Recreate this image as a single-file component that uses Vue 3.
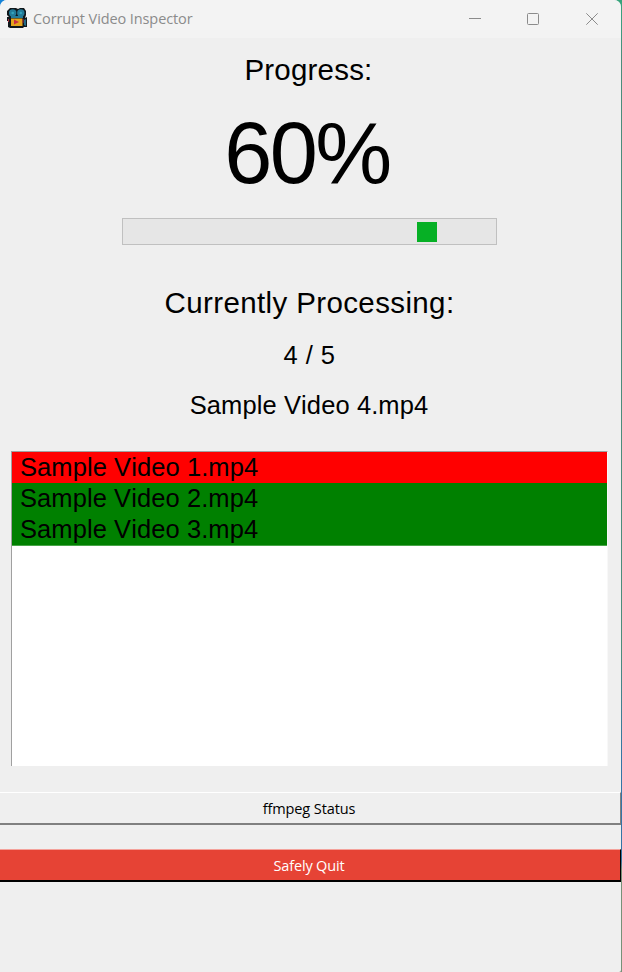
<script setup>
const videos = [
  { name: 'Sample Video 1.mp4', corrupt: true },
  { name: 'Sample Video 2.mp4', corrupt: false },
  { name: 'Sample Video 3.mp4', corrupt: false },
]
const marker = { left: 293 }
</script>

<template>
  <div class="desktop">
    <main class="window">
      <header class="titlebar">
        <svg class="logo" width="21" height="21" viewBox="0 0 21 21">
          <path d="M3 0h6l2 1 2-1h4l2 3v4l-1 3 2-1v10h-3l-1 1H3l-2-1v-6H0v-4h2L0 7V3z" fill="#10171b" />
          <circle cx="5.7" cy="5" r="3.7" fill="#237b98" />
          <circle cx="13.8" cy="5" r="3.7" fill="#237b98" />
          <circle cx="5.7" cy="5" r="1.3" fill="#35a5bd" />
          <circle cx="13.8" cy="5" r="1.3" fill="#35a5bd" />
          <path d="M4 8h12v2H4z" fill="#237b98" />
          <path d="M4 10.5h11.5V18H4z" fill="#e6a51d" />
          <path d="M7 11.5v5l5-2.5z" fill="#c92f43" />
          <path d="M1 11h1v3H1zM15.5 11h1v4h-1z" fill="#a72b3a" />
          <path d="M17 12l2-1v7l-2-1z" fill="#236b87" />
        </svg>
        <span class="title">Corrupt Video Inspector</span>
        <nav class="controls">
          <svg width="12" height="12" viewBox="0 0 12 12"><path d="M0 5.5h12" /></svg>
          <svg width="12" height="12" viewBox="0 0 12 12"><rect x=".5" y=".5" width="11" height="11" rx="1" /></svg>
          <svg class="close" width="12" height="12" viewBox="0 0 12 12"><path d="M.3.3l11.4 11.4M11.7.3L.3 11.7" /></svg>
        </nav>
      </header>

      <h1 class="heading progress-label">Progress:</h1>
      <div class="percent">60%</div>
      <div class="track"><div class="marker" :style="{ marginLeft: marker.left + 'px' }"></div></div>
      <h2 class="heading current-label">Currently Processing:</h2>
      <div class="detail count">4 / 5</div>
      <div class="detail file">Sample Video 4.mp4</div>

      <ul class="list">
        <li v-for="video in videos" :key="video.name" :class="{ corrupt: video.corrupt }">{{ video.name }}</li>
      </ul>

      <button class="btn status">ffmpeg Status</button>
      <button class="btn quit">Safely Quit</button>
    </main>
  </div>
</template>

<style>
body { margin: 0; }
</style>

<style scoped>
.desktop {
  width: 622px;
  height: 972px;
  box-sizing: border-box;
  padding-right: 1px;
  overflow: hidden;
  background: linear-gradient(90deg, #1683d8 0 20px, transparent 20px) 0 0 / 100% 20px no-repeat,
    linear-gradient(#36a47c 0, #3d9c80 25px, #4b8c7c 60px, #4b8c7c 650px, #3475a5 760px, #3475a5 860px, #779078 870px, #779078 100%);
}
.window {
  width: 621px;
  height: 972px;
  display: flex;
  flex-direction: column;
  align-items: center;
  overflow: hidden;
  border-radius: 7px 7px 2px 0;
  background: #efefef;
  color: #000;
  font-family: "Liberation Sans", Arial, sans-serif;
  font-kerning: none;
}
.titlebar {
  width: 100%;
  height: 38px;
  flex: none;
  display: flex;
  align-items: center;
  box-sizing: border-box;
  padding: 0 23px 0 7px;
  background: #f3f3f3;
}
.logo { flex: none; margin-top: -2px; }
.title {
  margin: -1px 0 0 5px;
  font: 14.5px/20px "Open Sans", "Noto Sans", sans-serif;
  letter-spacing: -0.1px;
  white-space: nowrap;
  color: #8b8b8b;
}
.controls { display: flex; gap: 46px; margin-left: auto; }
.controls svg { fill: none; stroke: #8b8b8b; stroke-width: 1; }
.controls .close { margin-left: 1px; }
.heading {
  margin: 0;
  font-size: 29.5px;
  font-weight: 400;
  line-height: 34px;
  letter-spacing: 0.38px;
  white-space: nowrap;
}
.progress-label { margin-top: 15px; margin-right: 4px; letter-spacing: 0.2px; }
.percent { margin-top: 18px; font-size: 86.5px; line-height: 96px; margin-right: 7px; letter-spacing: -2.6px; }
.track {
  width: 375px;
  height: 27px;
  flex: none;
  box-sizing: border-box;
  margin-top: 17px;
  margin-right: 2px;
  padding: 3px 1px;
  border: 1px solid #c0c0c0;
  background: #e6e6e6;
}
.marker { width: 20px; height: 20px; background: #06b025; }
.current-label { margin-top: 41px; margin-right: 2px; }
.detail { font-size: 25.5px; line-height: 30px; letter-spacing: 0.1px; white-space: nowrap; margin-right: 3px; }
.count { margin-top: 20px; letter-spacing: 0.5px; margin-right: 2px; }
.file { margin-top: 20px; }
.list {
  width: 597px;
  height: 315px;
  flex: none;
  box-sizing: border-box;
  margin: 31px 2px 0 0;
  padding: 0;
  border-top: 1px solid #a0a0a0;
  border-left: 1px solid #a0a0a0;
  border-right: 1px solid #f8f8f8;
  list-style: none;
  background: #fff;
}
.list li {
  height: 31px;
  padding-left: 8px;
  background: #008000;
  font-size: 25.5px;
  line-height: 31px;
  letter-spacing: 0.08px;
}
.list li:last-child { border-bottom: 1px solid #48a448; }
.list .corrupt { background: #f00; }
.btn {
  width: 621px;
  height: 33px;
  flex: none;
  box-sizing: border-box;
  padding: 1px 2px 0 0;
  border-style: solid;
  border-width: 1px 1px 2px 0;
  font: 14.5px/28px "Open Sans", "Noto Sans", sans-serif;
  letter-spacing: -0.1px;
}
.status {
  margin-top: 26px;
  border-color: #fff #808080 #808080;
  background: #efefef;
  color: #000;
}
.quit {
  margin-top: 24px;
  border-color: #f4a29b #000 #000;
  background: #e64335;
  color: #fff;
  letter-spacing: -0.15px;
}
</style>
